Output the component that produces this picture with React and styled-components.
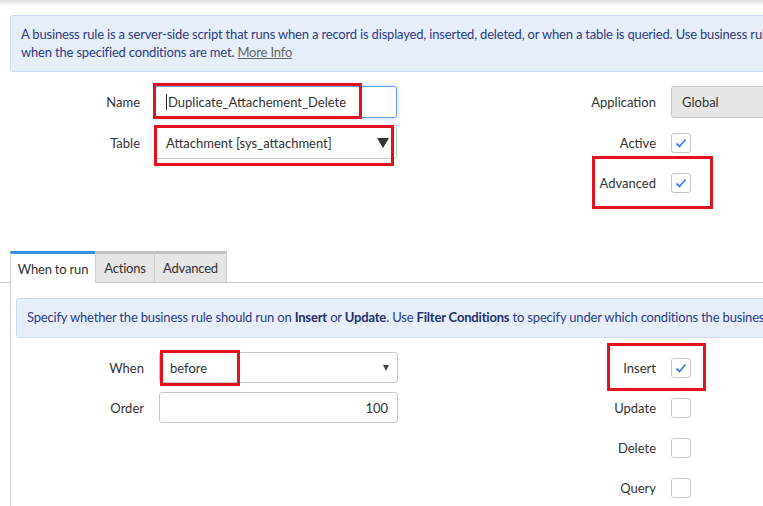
import React from "react";
import styled, { createGlobalStyle } from "styled-components";

const GlobalStyle = createGlobalStyle`
  body {
    margin: 0;
    background: #fff;
    font-family: Lato, "Open Sans", sans-serif;
    color: #333;
    overflow: hidden;
  }
`;

const Page = styled.div`
  width: 763px;
  height: 506px;
  overflow: hidden;
  position: relative;
`;

const Inner = styled.div`
  width: 980px;
  position: relative;
`;

const TopShade = styled.div`
  height: 6px;
  background: linear-gradient(#e2e2e2, #fff);
`;

const Notice = styled.div`
  margin: ${p => p.$margin || "9px 0 0 10px"};
  padding: ${p => p.$padding || "10px 10px"};
  background: #e5eef9;
  border: 1px solid #c9dcf2;
  border-radius: 3px;
  color: #2e3c87;
  font-size: 13px;
  letter-spacing: -0.18px;
  line-height: 17.5px;

  a {
    color: #666;
    text-decoration: underline;
  }
  b {
    font-weight: 700;
    color: #24306e;
  }
`;

const FormGrid = styled.div`
  display: grid;
  grid-template-columns: ${p => p.$cols};
  grid-auto-rows: 32px;
  column-gap: 15px;
  row-gap: ${p => p.$rowGap || "8px"};
  margin: ${p => p.$margin};
  align-items: center;
`;

const Label = styled.div`
  text-align: right;
  font-size: 13px;
  color: #333;
`;

const Cell = styled.div`
  position: relative;
  height: 100%;
  display: flex;
  align-items: center;
`;

const TextBox = styled.div`
  box-sizing: border-box;
  width: 100%;
  height: ${p => p.$h || "32px"};
  display: flex;
  align-items: center;
  justify-content: ${p => (p.$right ? "flex-end" : "space-between")};
  padding: 0 ${p => (p.$right ? "9px" : "10px")} 0 10px;
  font-size: 13px;
  color: #333;
  background: ${p => (p.$readonly ? "#e6e6e6" : "#fff")};
  border: 1px solid ${p => (p.$focus ? "#69a0f2" : "#c8c8c8")};
  border-radius: 3px;
  box-shadow: ${p => (p.$focus ? "0 0 4px rgba(82,150,255,0.45)" : "none")};
`;

const Caret = styled.span`
  display: inline-block;
  width: 1px;
  height: 16px;
  background: #222;
  margin-right: 1px;
  vertical-align: -3px;
`;

const BigArrow = styled.span`
  width: 0;
  height: 0;
  border-left: 6px solid transparent;
  border-right: 6px solid transparent;
  border-top: 10px solid #333;
  margin-right: -3px;
`;

const SmallArrow = styled.span`
  width: 0;
  height: 0;
  border-left: 3.5px solid transparent;
  border-right: 3.5px solid transparent;
  border-top: 6px solid #444;
  margin-right: -2px;
`;

const Box = styled.div`
  box-sizing: border-box;
  width: 20px;
  height: 20px;
  border: 1px solid #c4c4c4;
  border-radius: 3px;
  background: #fff;
  display: flex;
  align-items: center;
  justify-content: center;
`;

const Highlight = styled.div`
  position: absolute;
  left: ${p => p.$x}px;
  top: ${p => p.$y}px;
  width: ${p => p.$w}px;
  height: ${p => p.$h}px;
  box-sizing: border-box;
  border: 3px solid #e3121c;
  pointer-events: none;
`;

const TabBar = styled.div`
  display: flex;
  margin-top: ${p => p.$top};
  padding-left: 10px;
  border-bottom: 1px solid #c8c8c8;
  height: 31px;
`;

const Tab = styled.div`
  box-sizing: border-box;
  width: ${p => p.$w}px;
  height: ${p => (p.$active ? "32px" : "31px")};
  display: flex;
  align-items: center;
  justify-content: center;
  font-size: 13px;
  letter-spacing: -0.2px;
  color: #333;
  background: ${p => (p.$active ? "#fff" : "#e6e6e6")};
  border-top: 3px solid ${p => (p.$active ? "#3b8fe0" : "#c2c2c2")};
  border-left: 1px solid #cfcfcf;
  border-right: ${p => (p.$last ? "1px solid #cfcfcf" : "none")};
`;

const Panel = styled.div`
  margin-left: 10px;
  border-left: 1px solid #cfcfcf;
  padding: 15px 0 0 5px;
  height: 240px;
`;

function Check({ on }) {
  return (
    <Box>
      {on && (
        <svg width="14" height="14" viewBox="0 0 14 14">
          <polyline
            points="2.5,7.5 5.5,10.5 11.5,3.5"
            fill="none"
            stroke="#3d7ff0"
            strokeWidth="1.8"
          />
        </svg>
      )}
    </Box>
  );
}

export default function App() {
  return (
    <Page>
      <GlobalStyle />
      <Inner>
        <TopShade />
        <Notice>
          A business rule is a server-side script that runs when a record is
          displayed, inserted, deleted, or when a table is queried. Use business
          rules to accomplish tasks
          <br />
          when the specified conditions are met. <a>More Info</a>
        </Notice>

        <FormGrid
          $cols="130px 242px 244px 200px"
          $rowGap="8.5px"
          $margin="14px 0 0 10px"
        >
          <Label>Name</Label>
          <Cell>
            <TextBox $focus>
              <span>
                <Caret />
                Duplicate_Attachement_Delete
              </span>
            </TextBox>
            <Highlight $x={-2} $y={-3} $w={209} $h={36} />
          </Cell>
          <Label>Application</Label>
          <Cell>
            <TextBox $readonly>Global</TextBox>
          </Cell>

          <Label>Table</Label>
          <Cell>
            <TextBox>
              <span>Attachment [sys_attachment]</span>
              <BigArrow />
            </TextBox>
            <Highlight $x={-1} $y={-2} $w={240} $h={41} />
          </Cell>
          <Label>Active</Label>
          <Cell>
            <Check on />
          </Cell>

          <span />
          <span />
          <Label>Advanced</Label>
          <Cell>
            <Check on />
            <Highlight $x={-79} $y={-11} $w={121} $h={53} />
          </Cell>
        </FormGrid>

        <TabBar $top="52px">
          <Tab $active $w={85}>
            When to run
          </Tab>
          <Tab $w={59}>Actions</Tab>
          <Tab $w={73} $last>
            Advanced
          </Tab>
        </TabBar>

        <Panel>
          <Notice $margin="0" $padding="10px 10px">
            Specify whether the business rule should run on <b>Insert</b> or{" "}
            <b>Update</b>. Use <b>Filter Conditions</b> to specify under which
            conditions the business rule should run.
          </Notice>

          <FormGrid $cols="128px 239px 243px 60px" $margin="14px 0 0 0">
            <Label>When</Label>
            <Cell>
              <TextBox $h="31px">
                <span>before</span>
                <SmallArrow />
              </TextBox>
              <Highlight $x={1} $y={-2} $w={80} $h={36} />
            </Cell>
            <Label>Insert</Label>
            <Cell>
              <Check on />
              <Highlight $x={-64} $y={-9} $w={99} $h={48} />
            </Cell>

            <Label>Order</Label>
            <Cell>
              <TextBox $h="31px" $right>
                100
              </TextBox>
            </Cell>
            <Label>Update</Label>
            <Cell>
              <Check />
            </Cell>

            <span />
            <span />
            <Label>Delete</Label>
            <Cell>
              <Check />
            </Cell>

            <span />
            <span />
            <Label>Query</Label>
            <Cell>
              <Check />
            </Cell>
          </FormGrid>
        </Panel>
      </Inner>
    </Page>
  );
}
